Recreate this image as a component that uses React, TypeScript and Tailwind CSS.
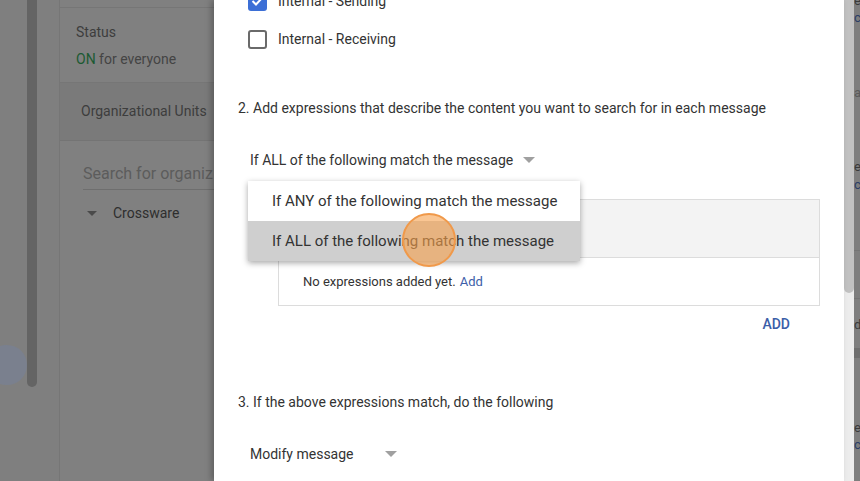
import React from "react";

function Caret({ className = "" }: { className?: string }) {
  return (
    <svg width="12" height="6" viewBox="0 0 12 6" className={className}>
      <path d="M0 0 L12 0 L6 6 Z" fill="currentColor" />
    </svg>
  );
}

export default function App() {
  return (
    <div
      className="relative w-[860px] h-[481px] overflow-hidden flex bg-[#7f7f7f]"
      style={{ fontFamily: "Roboto, 'Noto Sans', Arial, sans-serif" }}
    >
      {/* far left strip */}
      <div className="relative w-[60px] h-full bg-[#7f7f7f] border-r border-[#767676] flex">
        <div className="w-[27px]" />
        <div className="w-[10px] h-[387px] bg-[#646464] rounded-b-full" />
        <div className="absolute left-[-14px] top-[345px] w-[41px] h-[40px] rounded-full bg-[#7a808e]" />
      </div>

      {/* left panel */}
      <div className="w-[154px] h-full flex flex-col bg-[#808080] text-[14px]">
        <div className="h-[8px] border-b border-[#767676]" />
        <div className="h-[75px] pl-[16px] pt-[14px] border-b border-[#767676]">
          <div className="text-[#3d3d3d] leading-[20px]">Status</div>
          <div className="leading-[20px] mt-[7px] whitespace-nowrap">
            <span className="text-[#1b5a32]">ON</span>
            <span className="text-[#444]"> for everyone</span>
          </div>
        </div>
        <div className="h-[58px] pl-[21px] flex items-center bg-[#7a7a7a] border-b border-[#747474] text-[#3d3d3d] whitespace-nowrap overflow-hidden">
          Organizational Units
        </div>
        <div className="pl-[23px] pt-[22px]">
          <div className="h-[27px] border-b border-[#6e6e6e] text-[16px] text-[#5c5c5c] whitespace-nowrap overflow-hidden leading-[22px]">
            Search for organiz
          </div>
          <div className="flex items-center mt-[12px] h-[22px] whitespace-nowrap">
            <Caret className="ml-[4px] text-[#4a4a4a] w-[10px] h-[5px]" />
            <span className="ml-[16px] text-[#2e2e2e]">Crossware</span>
          </div>
        </div>
      </div>

      {/* dialog */}
      <div className="relative w-[630px] h-full bg-white shadow-[-3px_0_6px_rgba(0,0,0,0.25)] text-[14px] text-[#333]">
        <div className="flex flex-col pl-[34px]">
          <div className="h-[38px] mt-[-18px] flex items-center">
            <div className="w-[19px] h-[19px] rounded-[3px] bg-[#3c6fd6] flex items-center justify-center">
              <svg width="13" height="10" viewBox="0 0 13 10">
                <path d="M1.5 5 L5 8.5 L11.5 1.5" stroke="white" strokeWidth="2" fill="none" />
              </svg>
            </div>
            <span className="ml-[11px]">Internal - Sending</span>
          </div>
          <div className="h-[38px] flex items-center">
            <div className="w-[19px] h-[19px] rounded-[3px] border-2 border-[#6a6a6a]" />
            <span className="ml-[11px]">Internal - Receiving</span>
          </div>
          <div className="mt-[40px] leading-[20px] h-[20px] ml-[-10px]">
            2. Add expressions that describe the content you want to search for in each message
          </div>
          <div className="mt-[32px] ml-[2px] h-[20px] leading-[20px] flex items-center">
            <span>If ALL of the following match the message</span>
            <Caret className="ml-[10px] text-[#a0a0a0]" />
          </div>
          <div className="mt-[29px] ml-[30px] w-[542px] border border-[#dcdcdc]">
            <div className="h-[58px] bg-[#f3f3f3] border-b border-[#dcdcdc]" />
            <div className="h-[47px] flex items-center pl-[24px] text-[13px]">
              No expressions added yet.<span className="ml-[4px] text-[#3c5ea8]">Add</span>
            </div>
          </div>
          <div className="h-[36px] flex items-center justify-end pr-[54px] text-[14px] font-medium text-[#3c5ea8]">
            ADD
          </div>
          <div className="mt-[50px] ml-[-10px] h-[20px] leading-[20px]">
            3. If the above expressions match, do the following
          </div>
          <div className="mt-[32px] ml-[2px] h-[20px] leading-[20px] flex items-center">
            <span>Modify message</span>
            <Caret className="ml-[31px] text-[#a0a0a0]" />
          </div>
        </div>
      </div>

      {/* scrollbar */}
      <div className="w-[10px] h-full bg-[#ececec] flex flex-col">
        <div className="h-[293px] bg-[#c1c1c1] rounded-b-[5px]" />
      </div>

      {/* right overlay strip */}
      <div className="w-[6px] h-full bg-[#7e7e7e] overflow-hidden text-[13px] leading-[18px] text-[#3a3a3a] relative">
        <div className="absolute left-[0px] top-[-8px]">e</div>
        <div className="absolute left-[0px] top-[9px] text-[#2b3d66]">c</div>
        <div className="absolute left-[0px] top-[84px] text-[#5a5a5a]">a</div>
        <div className="absolute left-[0px] top-[158px]">e</div>
        <div className="absolute left-[0px] top-[176px] text-[#2b3d66]">c</div>
        <div className="absolute left-0 top-[250px] w-full h-px bg-[#747474]" />
        <div className="absolute left-0 top-[298px] w-full h-px bg-[#747474]" />
        <div className="absolute left-[0px] top-[316px]">d</div>
        <div className="absolute left-0 top-[348px] w-full h-[10px] bg-[#6e6e6e]" />
        <div className="absolute left-[0px] top-[419px]">e</div>
        <div className="absolute left-[0px] top-[436px] text-[#2b3d66]">c</div>
      </div>

      {/* dropdown menu */}
      <div className="absolute left-[248px] top-[181px] w-[332px] bg-white shadow-[0_2px_6px_rgba(0,0,0,0.35)] text-[15px] text-[#333]">
        <div className="h-[40px] flex items-center pl-[24px] whitespace-nowrap">
          If ANY of the following match the message
        </div>
        <div className="h-[40px] flex items-center pl-[24px] bg-[#cfcfcf] whitespace-nowrap">
          If ALL of the following match the message
        </div>
      </div>

      {/* click indicator */}
      <div className="absolute left-[402px] top-[213px] w-[54px] h-[54px] rounded-full bg-[#f7a04b]/60 border-2 border-[#f0994a]" />
    </div>
  );
}
